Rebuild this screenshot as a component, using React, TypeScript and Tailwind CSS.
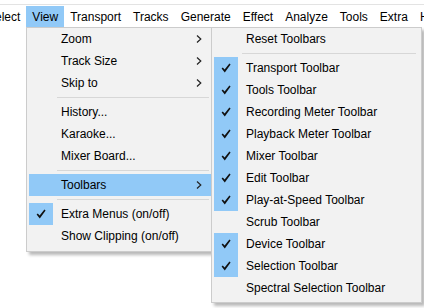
const menuBar = ["Select", "View", "Transport", "Tracks", "Generate", "Effect", "Analyze", "Tools", "Extra", "Help"];

type Row =
  | { sep: true }
  | { sep?: false; label: string; sub?: boolean; checked?: boolean; active?: boolean };

const viewMenu: Row[] = [
  { label: "Zoom", sub: true },
  { label: "Track Size", sub: true },
  { label: "Skip to", sub: true },
  { sep: true },
  { label: "History..." },
  { label: "Karaoke..." },
  { label: "Mixer Board..." },
  { sep: true },
  { label: "Toolbars", sub: true, active: true },
  { sep: true },
  { label: "Extra Menus (on/off)", checked: true },
  { label: "Show Clipping (on/off)" },
];

const toolbarsMenu: Row[] = [
  { label: "Reset Toolbars" },
  { sep: true },
  { label: "Transport Toolbar", checked: true },
  { label: "Tools Toolbar", checked: true },
  { label: "Recording Meter Toolbar", checked: true },
  { label: "Playback Meter Toolbar", checked: true },
  { label: "Mixer Toolbar", checked: true },
  { label: "Edit Toolbar", checked: true },
  { label: "Play-at-Speed Toolbar", checked: true },
  { label: "Scrub Toolbar" },
  { label: "Device Toolbar", checked: true },
  { label: "Selection Toolbar", checked: true },
  { label: "Spectral Selection Toolbar" },
];

function Check() {
  return (
    <svg width="10" height="10" viewBox="0 0 10 10">
      <path d="M0.6 5.4 L1.8 4.4 L3.6 6.6 L8.4 0.6 L9.6 1.4 L3.8 9.4 Z" fill="#111" />
    </svg>
  );
}

function Arrow() {
  return (
    <svg width="6" height="8" viewBox="0 0 6 8">
      <path d="M1 0.5 L4.8 4 L1 7.5" fill="none" stroke="#222" strokeWidth="1.2" />
    </svg>
  );
}

function Menu({ rows, sepRight }: { rows: Row[]; sepRight: string }) {
  return (
    <>
      {rows.map((r, i) =>
        r.sep ? (
          <div key={i} className="h-[7px] flex items-center ml-[30px]">
            <div className={`h-px flex-1 bg-[#d7d7d7] ${sepRight}`} />
          </div>
        ) : (
          <div key={i} className={`h-[22px] ml-[2px] flex items-center ${r.active ? "bg-[#91c9f7]" : ""}`}>
            <div className={`w-[24px] h-full flex items-center justify-center ${r.checked ? "bg-[#91c9f7]" : ""}`}>
              {r.checked && <Check />}
            </div>
            <span className="pl-[8px] flex-1 whitespace-nowrap">{r.label}</span>
            {r.sub && (
              <span className="mr-[9px] flex items-center">
                <Arrow />
              </span>
            )}
          </div>
        )
      )}
    </>
  );
}

export default function App() {
  return (
    <div className="relative w-[424px] h-[308px] bg-white overflow-hidden text-[12px] text-black font-['Liberation_Sans',Arial,sans-serif]">
      <div className="pt-[4px]">
        <div className="h-px bg-[#e3e3e3]" />
      </div>
      <div className="flex h-[21px] mt-px ml-[-19px]">
        {menuBar.map(m => (
          <div key={m} className={`px-[6px] flex items-center whitespace-nowrap ${m === "View" ? "bg-[#91c9f7]" : ""}`}>
            {m}
          </div>
        ))}
      </div>

      <div className="absolute left-[26px] top-[27px] w-[186px] border border-[#cccccc] bg-[#f2f2f2] pb-[4px] shadow-[3px_3px_3px_rgba(0,0,0,0.28)]">
        <Menu rows={viewMenu} sepRight="mr-[2px]" />
      </div>

      <div className="absolute left-[211px] top-[27px] w-[211px] border border-[#cccccc] bg-[#f2f2f2] pb-[3px] shadow-[3px_3px_3px_rgba(0,0,0,0.28)]">
        <Menu rows={toolbarsMenu} sepRight="mr-[5px]" />
      </div>
    </div>
  );
}
